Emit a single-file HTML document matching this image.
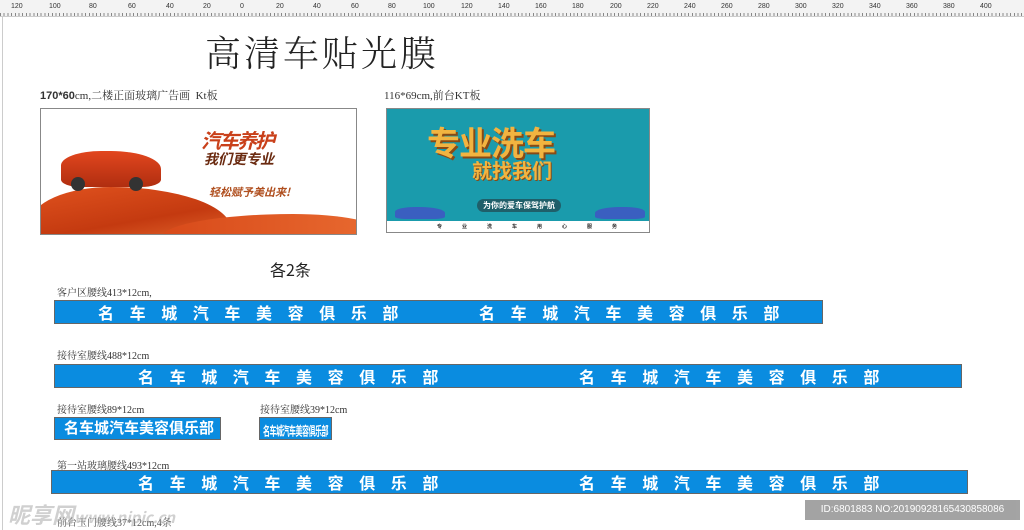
<!DOCTYPE html>
<html><head><meta charset="utf-8"><style>
body{margin:0;width:1024px;height:530px;background:#fff;position:relative;overflow:hidden;font-family:"Liberation Serif","Noto Serif CJK SC",serif}
.a{position:absolute}
.ruler{left:0;top:0;width:1024px;height:16px;background:#f3f3f3;border-bottom:1px solid #ccc;
background-image:repeating-linear-gradient(90deg,#888 0 1px,transparent 1px 3.7px);background-size:100% 3px;background-repeat:no-repeat;background-position:0 13px}
.rn{font:7px "Liberation Sans",sans-serif;color:#333;top:3px}
.lbl{font-size:10px;color:#333;font-family:"Liberation Serif","Noto Serif CJK SC",serif;white-space:nowrap}
.bar{background:#0a8ce0;border:1px solid #666;box-sizing:border-box;color:#fff;font:bold 16px "Liberation Sans","Noto Sans CJK SC",sans-serif;white-space:nowrap}
.bar span{position:absolute;top:-1px;letter-spacing:15.6px}
</style></head><body>
<div class="a ruler"></div>
<div class="a rn" style="left:11px">120</div><div class="a rn" style="left:49px">100</div><div class="a rn" style="left:89px">80</div><div class="a rn" style="left:128px">60</div><div class="a rn" style="left:166px">40</div><div class="a rn" style="left:203px">20</div><div class="a rn" style="left:240px">0</div><div class="a rn" style="left:276px">20</div><div class="a rn" style="left:313px">40</div><div class="a rn" style="left:351px">60</div><div class="a rn" style="left:388px">80</div><div class="a rn" style="left:423px">100</div><div class="a rn" style="left:461px">120</div><div class="a rn" style="left:498px">140</div><div class="a rn" style="left:535px">160</div><div class="a rn" style="left:572px">180</div><div class="a rn" style="left:610px">200</div><div class="a rn" style="left:647px">220</div><div class="a rn" style="left:684px">240</div><div class="a rn" style="left:721px">260</div><div class="a rn" style="left:758px">280</div><div class="a rn" style="left:795px">300</div><div class="a rn" style="left:832px">320</div><div class="a rn" style="left:869px">340</div><div class="a rn" style="left:906px">360</div><div class="a rn" style="left:943px">380</div><div class="a rn" style="left:980px">400</div>
<div class="a" style="left:2px;top:17px;width:1px;height:513px;background:#ccc"></div>

<div class="a" style="left:205px;top:26px;font-size:36px;color:#222;letter-spacing:3px;font-family:'Liberation Serif','Noto Serif CJK SC',serif;font-weight:300">高清车贴光膜</div>
<div class="a lbl" style="left:40px;top:87px;font-size:11px"><b style="font-family:'Liberation Sans'">170*60</b>cm,二楼正面玻璃广告画 &nbsp;Kt板</div>
<div class="a lbl" style="left:384px;top:87px;font-size:11px">116*69cm,前台KT板</div>

<div class="a" style="left:40px;top:108px;width:317px;height:127px;border:1px solid #888;box-sizing:border-box;background:#fff;overflow:hidden">
 <div class="a" style="left:-10px;top:78px;width:200px;height:70px;background:linear-gradient(170deg,#e0521e,#c43a10 50%,#f07a3a);border-radius:40% 60% 0 0/50% 60% 0 0"></div>
 <div class="a" style="left:120px;top:105px;width:220px;height:30px;background:linear-gradient(90deg,#d84a1a,#e86a30);border-radius:60% 40% 0 0/80% 60% 0 0"></div>
 <div class="a" style="left:20px;top:42px;width:100px;height:36px;background:linear-gradient(#e2461e,#b02e10);border-radius:40% 50% 20% 20%"></div>
 <div class="a" style="left:30px;top:68px;width:14px;height:14px;background:#333;border-radius:50%"></div>
 <div class="a" style="left:88px;top:68px;width:14px;height:14px;background:#333;border-radius:50%"></div>
 <div class="a" style="left:160px;top:16px;font:bold italic 20px 'Noto Sans CJK SC',sans-serif;color:#c9401a;letter-spacing:-2px">汽车养护</div>
 <div class="a" style="left:163px;top:40px;font:bold italic 14px 'Noto Sans CJK SC',sans-serif;color:#6a2a10">我们更专业</div>
 <div class="a" style="left:168px;top:75px;font:bold italic 11px 'Noto Sans CJK SC',sans-serif;color:#b05020">轻松赋予美出来!</div>
</div>

<div class="a" style="left:386px;top:108px;width:264px;height:125px;border:1px solid #888;box-sizing:border-box;background:#1a9bac;overflow:hidden">
 <div class="a" style="left:40px;top:8px;font:bold 33px 'Noto Sans CJK SC',sans-serif;color:#f2b440;letter-spacing:-1px;text-shadow:2px 2px 0 #8a4a14">专业洗车</div>
 <div class="a" style="left:85px;top:46px;font:bold 20px 'Noto Sans CJK SC',sans-serif;color:#f2b440;text-shadow:1px 1px 0 #8a4a14">就找我们</div>
 <div class="a" style="left:90px;top:90px;height:13px;padding:0 6px;background:#1f5f6a;border-radius:7px;font:bold 8px/13px 'Noto Sans CJK SC',sans-serif;color:#fff">为你的爱车保驾护航</div>
 <div class="a" style="left:8px;top:98px;width:50px;height:12px;background:#3a5fc0;border-radius:40% 50% 20% 20%"></div>
 <div class="a" style="left:208px;top:98px;width:50px;height:12px;background:#3a5fc0;border-radius:50% 40% 20% 20%"></div>
 <div class="a" style="left:0;top:112px;width:264px;height:13px;background:#fff;font:bold 5px/13px sans-serif;color:#333;letter-spacing:20px;padding-left:50px">专业洗车用心服务</div>
</div>

<div class="a" style="left:270px;top:257px;font:16px 'Noto Sans CJK SC',sans-serif;color:#222">各2条</div>

<div class="a lbl" style="left:57px;top:284px">客户区腰线413*12cm,</div>
<div class="a bar" style="left:54px;top:300px;width:769px;height:24px"><span style="left:43px">名车城汽车美容俱乐部</span><span style="left:424px">名车城汽车美容俱乐部</span></div>

<div class="a lbl" style="left:57px;top:347px">接待室腰线488*12cm</div>
<div class="a bar" style="left:54px;top:364px;width:908px;height:24px"><span style="left:83px">名车城汽车美容俱乐部</span><span style="left:524px">名车城汽车美容俱乐部</span></div>

<div class="a lbl" style="left:57px;top:401px">接待室腰线89*12cm</div>
<div class="a bar" style="left:54px;top:417px;width:167px;height:23px"><span style="left:9px;letter-spacing:0;font-size:15px">名车城汽车美容俱乐部</span></div>
<div class="a lbl" style="left:260px;top:401px">接待室腰线39*12cm</div>
<div class="a bar" style="left:259px;top:417px;width:73px;height:23px"><span style="left:3px;top:5px;letter-spacing:-0.5px;font-size:7px;transform:scaleY(1.8);transform-origin:0 0">名车城汽车美容俱乐部</span></div>

<div class="a lbl" style="left:57px;top:457px">第一站玻璃腰线493*12cm</div>
<div class="a bar" style="left:51px;top:470px;width:917px;height:24px"><span style="left:86px">名车城汽车美容俱乐部</span><span style="left:527px">名车城汽车美容俱乐部</span></div>

<div class="a lbl" style="left:57px;top:514px;color:#555">前台玉门腰线37*12cm,4条</div>
<div class="a" style="left:8px;top:498px;font:bold italic 22px 'Noto Sans CJK SC',sans-serif;color:rgba(150,150,150,0.45)">昵享网<span style="font-size:15px">www.nipic.cn</span></div>
<div class="a" style="left:805px;top:500px;width:215px;height:20px;background:#9a9a9a;color:#fff;font:10px/20px 'Liberation Sans',sans-serif;text-align:center;opacity:.9">ID:6801883 NO:20190928165430858086</div>
</body></html>
